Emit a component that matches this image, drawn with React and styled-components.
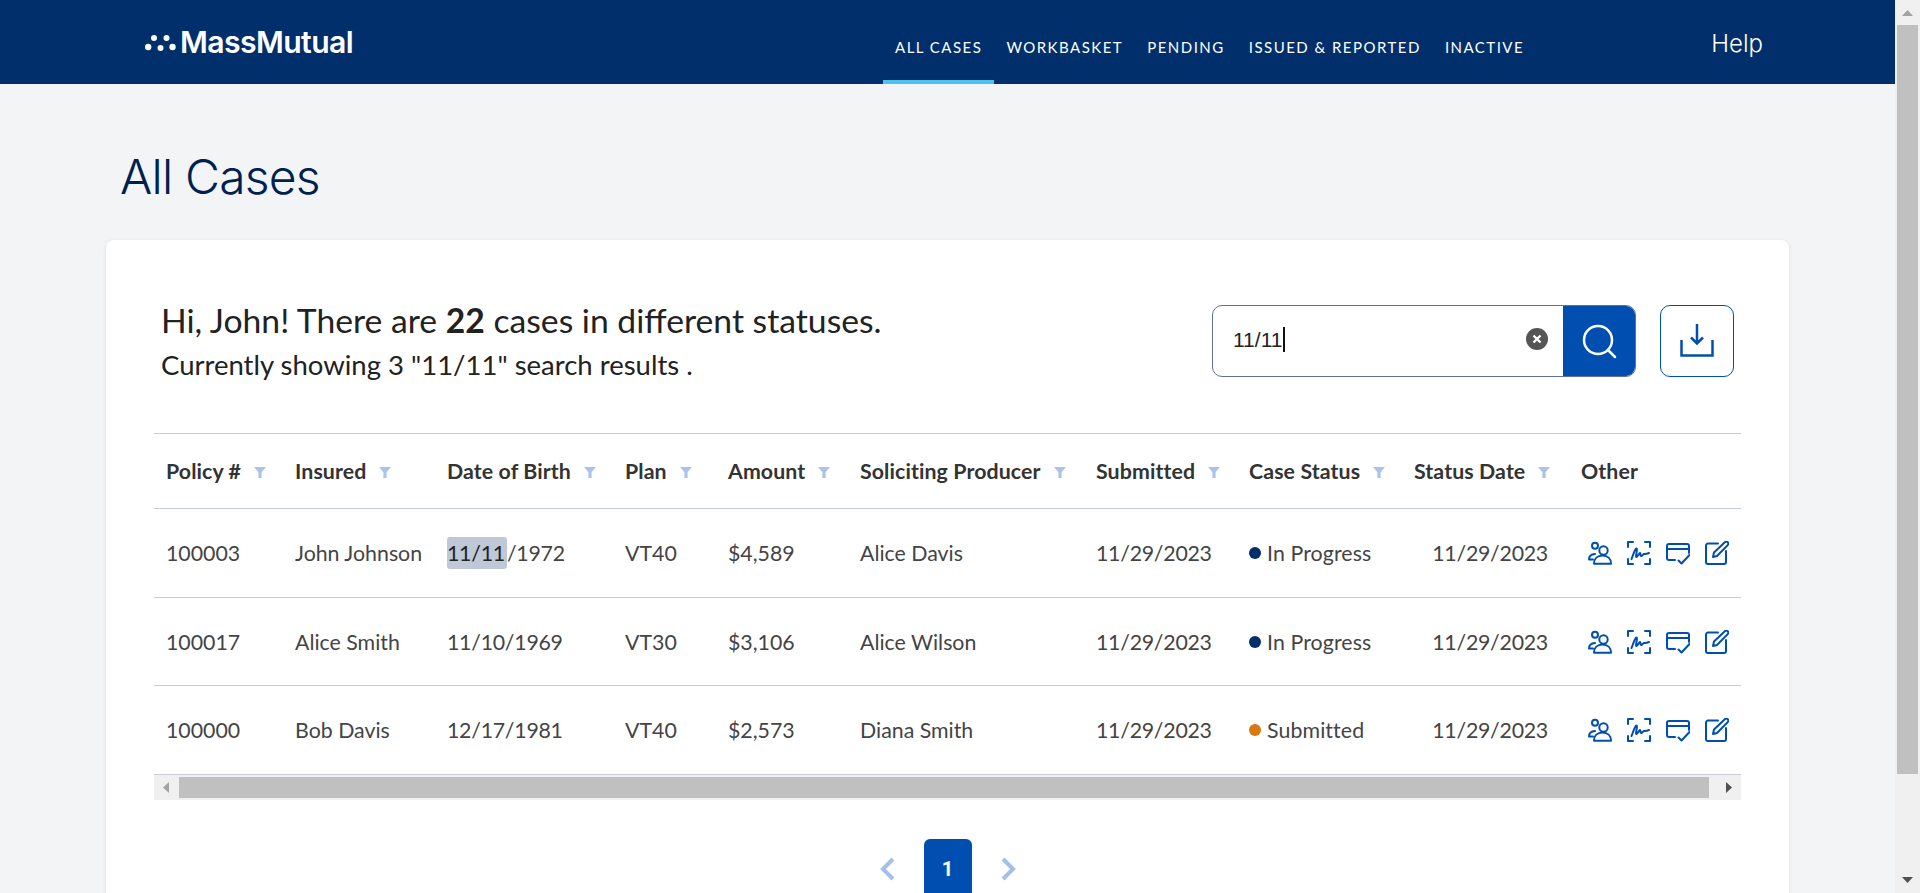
import React from 'react';
import styled, { createGlobalStyle } from 'styled-components';

const NAVY = '#002f6b';
const BLUE = '#004fb0';

const GlobalStyle = createGlobalStyle`
  html {
    background: #f3f4f6;
  }
  body {
    margin: 0;
    font-family: Lato, "Liberation Sans", sans-serif;
    color: #222;
  }
`;

const Shell = styled.div`
  display: flex;
  height: 100vh;
  overflow: hidden;
`;

const Page = styled.div`
  flex: 1;
  min-width: 0;
  overflow: hidden;
`;

const VerticalBar = styled.div`
  display: flex;
  flex-direction: column;
  width: 25px;
  background: #f0f0f0;
`;

const HorizontalBar = styled.div`
  display: flex;
  height: 25px;
  background: #f0f0f0;
`;

const BarTrack = styled.div`
  flex: 1;
  display: flex;
  flex-direction: ${(p) => (p.$vertical ? 'column' : 'row')};
`;

const BarThumb = styled.div`
  background: #c0c0c0;
  ${(p) => (p.$vertical
    ? 'height: 749px; margin: 0 2px;'
    : 'flex: 1; margin: 2px 7px 2px 0;')}
`;

const BarArrow = styled.svg`
  flex: none;
  display: block;
  width: 25px;
  height: 25px;
  fill: ${(p) => (p.$dim ? '#a3a3a3' : '#505050')};
`;

const Header = styled.header`
  display: flex;
  align-items: stretch;
  height: 84px;
  padding: 0 132px 0 145px;
  background: ${NAVY};
`;

const Logo = styled.div`
  display: flex;
  align-items: center;
  gap: 4px;
  width: 738px;
  color: #fff;
  font-family: Inter, sans-serif;
  font-size: 30.2px;
  font-weight: 600;
  letter-spacing: -0.6px;
`;

const Nav = styled.nav`
  display: flex;
`;

const NavItem = styled.a`
  display: flex;
  align-items: center;
  padding: 13px 12px 0;
  color: #fff;
  font-size: 15px;
  letter-spacing: 1.48px;
  text-transform: uppercase;
  border-bottom: 4px solid ${(p) => (p.$active ? '#4cc3ee' : 'transparent')};
`;

const Help = styled.a`
  margin-left: auto;
  align-self: center;
  padding-top: 2px;
  color: #fff;
  font-family: Inter, sans-serif;
  font-size: 24px;
  font-weight: 300;
`;

const Main = styled.main`
  padding: 0 106px;
`;

const Title = styled.h1`
  margin: 0;
  padding: 65px 0 0 14px;
  height: 156px;
  box-sizing: border-box;
  color: #00214f;
  font-family: Inter, sans-serif;
  font-size: 48px;
  line-height: 56px;
  font-weight: 300;
  letter-spacing: -0.8px;
`;

const Card = styled.section`
  padding: 59px 48px 0;
  height: 720px;
  box-sizing: border-box;
  background: #fff;
  border-radius: 8px;
  box-shadow: 0 1px 4px rgba(0, 0, 0, 0.1);
`;

const Summary = styled.div`
  display: flex;
  justify-content: space-between;
  align-items: center;
  padding: 0 7px 0 7px;
`;

const Greeting = styled.h2`
  margin: 0;
  font-size: 33.7px;
  line-height: 42px;
  font-weight: 400;
  color: #222;

  b {
    font-weight: 700;
  }
`;

const Showing = styled.p`
  margin: 7px 0 0;
  font-size: 27.5px;
  line-height: 34px;
  color: #222;
`;

const Tools = styled.div`
  display: flex;
  gap: 24px;
`;

const Search = styled.div`
  display: flex;
  align-items: center;
  width: 424px;
  height: 72px;
  box-sizing: border-box;
  border: 1px solid #5f7196;
  border-radius: 10px;
  overflow: hidden;
`;

const SearchText = styled.span`
  flex: 1;
  display: flex;
  align-items: center;
  padding: 0 0 2px 20px;
  font-family: "Liberation Sans", sans-serif;
  font-size: 21px;
  color: #222;
`;

const Caret = styled.span`
  width: 2px;
  height: 25px;
  margin-left: 1px;
  background: #111;
`;

const Clear = styled.svg`
  width: 22px;
  height: 22px;
  margin: 0 15px 3px 0;
`;

const SearchButton = styled.button`
  display: flex;
  align-items: center;
  justify-content: center;
  width: 72px;
  height: 100%;
  padding: 0;
  border: 0;
  background: ${BLUE};
`;

const DownloadButton = styled.button`
  display: flex;
  align-items: center;
  justify-content: center;
  width: 74px;
  height: 72px;
  padding: 0;
  background: #fff;
  border: 1px solid ${BLUE};
  border-radius: 10px;
`;

const TableWrap = styled.div`
  margin-top: 51px;
  overflow: hidden;
`;

const Table = styled.table`
  width: 1594px;
  table-layout: fixed;
  border-collapse: collapse;
`;

const HeadCell = styled.th`
  height: 74px;
  padding: 0 0 0 12px;
  text-align: left;
  font-size: 21.33px;
  font-weight: 700;
  letter-spacing: 0.1px;
  color: #333;
  white-space: nowrap;
  border-top: 1px solid #c3ccdb;
  border-bottom: 1px solid #c3ccdb;
`;

const FilterIcon = styled.svg`
  width: 12px;
  height: 11px;
  margin-left: 13px;
  vertical-align: 1px;
`;

const Cell = styled.td`
  height: 87.7px;
  padding: 0 0 0 12px;
  font-size: 21.33px;
  color: #444;
  border-bottom: 1px solid #c9ccd4;
  white-space: nowrap;
  letter-spacing: ${(p) => (p.$date ? '-0.25px' : 'normal')};
  text-align: ${(p) => (p.$right ? 'right' : 'left')};
  padding-right: ${(p) => (p.$right ? '21px' : '0')};
`;

const Hit = styled.mark`
  padding: 3px 2px 3px 0;
  border-radius: 3px;
  background: #bfc8d6;
  color: #222;
`;

const Status = styled.span`
  display: flex;
  align-items: center;
  gap: 6px;
  letter-spacing: 0.1px;

  &::before {
    content: '';
    width: 12px;
    height: 12px;
    border-radius: 50%;
    background: ${(p) => p.$color};
  }
`;

const Actions = styled.div`
  display: flex;
  gap: 15px;
  padding-left: 7px;

  svg {
    width: 24px;
    height: 24px;
    fill: none;
    stroke: ${BLUE};
    stroke-width: 2;
    stroke-linecap: round;
    stroke-linejoin: round;
  }
`;

const Pager = styled.div`
  display: flex;
  justify-content: center;
  align-items: center;
  gap: 29px;
  margin-top: 39px;
`;

const PageNumber = styled.button`
  width: 48px;
  height: 60px;
  padding: 0;
  border: 0;
  border-radius: 6px;
  background: ${BLUE};
  color: #fff;
  font-family: Roboto, sans-serif;
  font-size: 20px;
  font-weight: 700;
`;

const Chevron = styled.svg`
  width: 15px;
  height: 24px;
  fill: none;
  stroke: #a2c0e8;
  stroke-width: 4;
`;

const columns = [
  ['Policy #', 129],
  ['Insured', 152],
  ['Date of Birth', 178],
  ['Plan', 103],
  ['Amount', 132],
  ['Soliciting Producer', 236],
  ['Submitted', 153],
  ['Case Status', 165],
  ['Status Date', 167],
  ['Other', 179],
];

const rows = [
  { id: '100003', insured: 'John Johnson', hit: '11/11', dob: '/1972', plan: 'VT40', amount: '$4,589', producer: 'Alice Davis', status: 'In Progress', color: NAVY },
  { id: '100017', insured: 'Alice Smith', dob: '11/10/1969', plan: 'VT30', amount: '$3,106', producer: 'Alice Wilson', status: 'In Progress', color: NAVY },
  { id: '100000', insured: 'Bob Davis', dob: '12/17/1981', plan: 'VT40', amount: '$2,573', producer: 'Diana Smith', status: 'Submitted', color: '#d9780f' },
];

const LogoMark = () => (
  <svg width="31" height="20" viewBox="0 0 31 20" fill="#fff">
    <circle cx="9" cy="6" r="3" />
    <circle cx="21.5" cy="6" r="3" />
    <circle cx="3.2" cy="15" r="3.2" />
    <circle cx="15.5" cy="16" r="3" />
    <circle cx="27.5" cy="15" r="3.2" />
  </svg>
);

const Filter = () => (
  <FilterIcon viewBox="0 0 12 11">
    <path d="M0 0h12L7.6 5.2V11H4.4V5.2z" fill="#a9c3e9" />
  </FilterIcon>
);

const PeopleIcon = () => (
  <svg viewBox="0 0 24 24">
    <circle cx="7" cy="4.7" r="3" />
    <circle cx="15.5" cy="9.5" r="4.2" />
    <path d="M6 22.7h17c0-5-3.5-8.2-8.5-8.2S6 17.7 6 22.7z" />
    <path d="M1 18.5c0-3 2-5.2 6-5.5M1 18.5h4" />
  </svg>
);

const SignatureIcon = () => (
  <svg viewBox="0 0 24 24">
    <path d="M1 6V1h5M18 1h5v5M23 18v5h-5M6 23H1v-5" />
    <path d="M4.5 18c1.5-3 3-10 5-10.5 1.5 0-1.5 9 0 8.5 1.5-.5 2.5-4 3.5-4s0 3.5 1.5 3 1.5-2 2.5-2 1.5.5 5-1" />
  </svg>
);

const CardCheckIcon = () => (
  <svg viewBox="0 0 24 24">
    <path d="M9 19H3a2 2 0 0 1-2-2V5a2 2 0 0 1 2-2h18a2 2 0 0 1 2 2v7" />
    <path d="M1 8h22M12.5 19.5l3 3 8-8.5" />
  </svg>
);

const EditIcon = () => (
  <svg viewBox="0 0 24 24">
    <path d="M13 2.5H3a2 2 0 0 0-2 2V21a2 2 0 0 0 2 2h16a2 2 0 0 0 2-2V10" />
    <path d="M8 16l1-4.5L19.8 1.2a1.8 1.8 0 0 1 2.9 2.9L12 15z" />
  </svg>
);

const Arrow = ({ points, dim }) => (
  <BarArrow viewBox="0 0 25 25" $dim={dim}>
    <polygon points={points} />
  </BarArrow>
);

export default function App() {
  return (
    <Shell>
      <GlobalStyle />
      <Page>
        <Header>
          <Logo>
            <LogoMark />
            MassMutual
          </Logo>
          <Nav>
            <NavItem $active>All Cases</NavItem>
            <NavItem>Workbasket</NavItem>
            <NavItem>Pending</NavItem>
            <NavItem>Issued &amp; Reported</NavItem>
            <NavItem>Inactive</NavItem>
          </Nav>
          <Help>Help</Help>
        </Header>
        <Main>
          <Title>All Cases</Title>
          <Card>
            <Summary>
              <div>
                <Greeting>Hi, John! There are <b>22</b> cases in different statuses.</Greeting>
                <Showing>Currently showing 3 "11/11" search results .</Showing>
              </div>
              <Tools>
                <Search>
                  <SearchText>11/11<Caret /></SearchText>
                  <Clear viewBox="0 0 22 22">
                    <circle cx="11" cy="11" r="11" fill="#555" />
                    <path d="M7.5 7.5l7 7M14.5 7.5l-7 7" stroke="#fff" strokeWidth="2.4" />
                  </Clear>
                  <SearchButton aria-label="Search">
                    <svg width="36" height="36" viewBox="0 0 36 36" fill="none" stroke="#fff" strokeWidth="2.5" strokeLinecap="round">
                      <circle cx="17" cy="17" r="14" />
                      <path d="M27 27l7 7" />
                    </svg>
                  </SearchButton>
                </Search>
                <DownloadButton aria-label="Download">
                  <svg width="36" height="36" viewBox="0 0 36 36" fill="none" stroke={BLUE} strokeWidth="2.5">
                    <path d="M2.5 17v15.5h31V17" />
                    <path d="M18 1v19M12 14.5l6 6 6-6" />
                  </svg>
                </DownloadButton>
              </Tools>
            </Summary>
            <TableWrap>
              <Table>
                <colgroup>
                  {columns.map(([name, width]) => <col key={name} width={width} />)}
                </colgroup>
                <thead>
                  <tr>
                    {columns.map(([name]) => (
                      <HeadCell key={name}>
                        {name}
                        {name !== 'Other' && <Filter />}
                      </HeadCell>
                    ))}
                  </tr>
                </thead>
                <tbody>
                  {rows.map((row) => (
                    <tr key={row.id}>
                      <Cell>{row.id}</Cell>
                      <Cell>{row.insured}</Cell>
                      <Cell $date>{row.hit && <Hit>{row.hit}</Hit>}{row.dob}</Cell>
                      <Cell>{row.plan}</Cell>
                      <Cell>{row.amount}</Cell>
                      <Cell>{row.producer}</Cell>
                      <Cell $date>11/29/2023</Cell>
                      <Cell><Status $color={row.color}>{row.status}</Status></Cell>
                      <Cell $date $right>11/29/2023</Cell>
                      <Cell>
                        <Actions>
                          <PeopleIcon />
                          <SignatureIcon />
                          <CardCheckIcon />
                          <EditIcon />
                        </Actions>
                      </Cell>
                    </tr>
                  ))}
                </tbody>
              </Table>
            </TableWrap>
            <HorizontalBar>
              <Arrow points="9,12.5 15,7 15,18" dim />
              <BarTrack>
                <BarThumb />
              </BarTrack>
              <Arrow points="10,7 16,12.5 10,18" />
            </HorizontalBar>
            <Pager>
              <Chevron viewBox="0 0 15 24"><path d="M13 2L3 12l10 10" /></Chevron>
              <PageNumber>1</PageNumber>
              <Chevron viewBox="0 0 15 24"><path d="M2 2l10 10L2 22" /></Chevron>
            </Pager>
          </Card>
        </Main>
      </Page>
      <VerticalBar>
        <Arrow points="7,16 12.5,10 18,16" dim />
        <BarTrack $vertical>
          <BarThumb $vertical />
        </BarTrack>
        <Arrow points="7,9 18,9 12.5,15" />
      </VerticalBar>
    </Shell>
  );
}
